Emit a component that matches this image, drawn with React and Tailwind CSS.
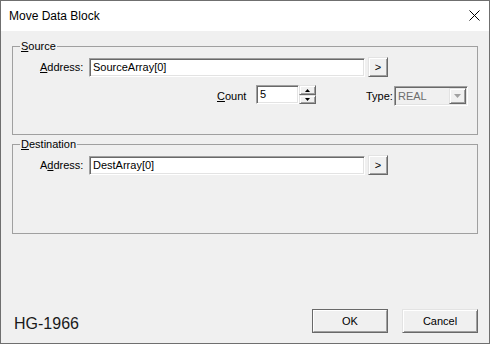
import React from 'react';

const font = { fontFamily: '"Liberation Sans", Arial, sans-serif' };

const sunken =
  'bg-white border border-t-[#a0a0a0] border-l-[#a0a0a0] border-b-white border-r-white shadow-[inset_1px_1px_0_#696969,inset_-1px_-1px_0_#e3e3e3]';
const raised =
  'bg-[#f0f0f0] border border-t-[#e3e3e3] border-l-[#e3e3e3] border-b-[#696969] border-r-[#696969] shadow-[inset_1px_1px_0_#fff,inset_-1px_-1px_0_#a0a0a0]';

const TextBox = ({ value, className = '' }) => (
  <div className={`${sunken} ${className} flex items-center pl-[3px] text-[11px] text-black`}>
    {value}
  </div>
);

const BrowseButton = () => (
  <button className={`${raised} ml-[3px] flex h-[20px] w-[20px] items-center justify-center text-[11px] text-black`}>
    &gt;
  </button>
);

const Spinner = () => (
  <div className="flex h-[19px] w-[17px] flex-col">
    <div className={`${raised} flex h-[10px] items-center justify-center`}>
      <svg width="5" height="3" viewBox="0 0 5 3">
        <path d="M2.5 0 L5 3 L0 3 Z" fill="#000" />
      </svg>
    </div>
    <div className={`${raised} flex h-[9px] items-center justify-center`}>
      <svg width="5" height="3" viewBox="0 0 5 3">
        <path d="M0 0 L5 0 L2.5 3 Z" fill="#000" />
      </svg>
    </div>
  </div>
);

const Combo = () => (
  <div className="flex h-[20px] w-[74px] border border-t-[#a0a0a0] border-l-[#a0a0a0] border-b-white border-r-white bg-[#f0f0f0] shadow-[inset_1px_1px_0_#696969,inset_-1px_-1px_0_#e3e3e3] p-[1px]">
    <div className="flex flex-1 items-center pl-[2px] text-[11px] text-[#6d6d6d]">REAL</div>
    <div className={`${raised} flex w-[17px] items-center justify-center`}>
      <svg width="7" height="4" viewBox="0 0 7 4">
        <path d="M0 0 L7 0 L3.5 4 Z" fill="#a0a0a0" />
      </svg>
    </div>
  </div>
);

const Group = ({ title, children, className = '' }) => (
  <fieldset className={`border border-[#a0a0a0] ${className}`}>
    <legend className="ml-[7px] px-[1px] text-[11px] leading-[13px] text-black">{title}</legend>
    {children}
  </fieldset>
);

export default function App() {
  return (
    <div
      className="flex h-[344px] w-[490px] flex-col border border-[#6f6f6f] bg-[#f0f0f0] text-black"
      style={font}
    >
      <div className="flex h-[30px] shrink-0 items-start justify-between bg-white pl-[8px] pr-[9px]">
        <span className="text-[12px] leading-[30px]">Move Data Block</span>
        <svg className="mt-[9px]" width="11" height="11" viewBox="0 0 11 11">
          <path d="M0.5 0.5 L10.5 10.5 M10.5 0.5 L0.5 10.5" stroke="#000" strokeWidth="1" />
        </svg>
      </div>

      <div className="flex flex-1 flex-col px-[11px]">
        <Group
          title={<><u>S</u>ource</>}
          className="mt-[9px] pb-[28px]"
        >
          <div className="mt-[4px] flex items-center pl-[27px]">
            <span className="w-[49px] text-[11px]"><u>A</u>ddress:</span>
            <TextBox value="SourceArray[0]" className="h-[19px] w-[276px]" />
            <BrowseButton />
          </div>
          <div className="mt-[8px] flex items-start pl-[204px]">
            <span className="mt-[3px] w-[39px] text-[11px]"><u>C</u>ount</span>
            <TextBox value="5" className="h-[19px] w-[43px]" />
            <Spinner />
            <span className="ml-[50px] mt-[3px] w-[28px] text-[11px]">Type:</span>
            <div className="mt-[1px]">
              <Combo />
            </div>
          </div>
        </Group>

        <Group
          title={<><u>D</u>estination</>}
          className="mt-[3px] pb-[58px]"
        >
          <div className="mt-[4px] flex items-center pl-[27px]">
            <span className="w-[49px] text-[11px]">A<u>d</u>dress:</span>
            <TextBox value="DestArray[0]" className="h-[19px] w-[276px]" />
            <BrowseButton />
          </div>
        </Group>

        <div className="mt-auto flex items-end justify-between pb-[10px]">
          <span className="ml-[2px] text-[16px] leading-[18px] text-[#1a1a1a]">HG-1966</span>
          <div className="flex gap-[14px]">
            <button className="h-[24px] w-[76px] border border-[#696969] bg-[#f0f0f0] p-0">
              <div className="flex h-full w-full items-center justify-center border border-t-white border-l-white border-b-[#a0a0a0] border-r-[#a0a0a0] text-[11px]">
                OK
              </div>
            </button>
            <button className={`${raised} h-[24px] w-[76px] text-[11px]`}>Cancel</button>
          </div>
        </div>
      </div>
    </div>
  );
}
